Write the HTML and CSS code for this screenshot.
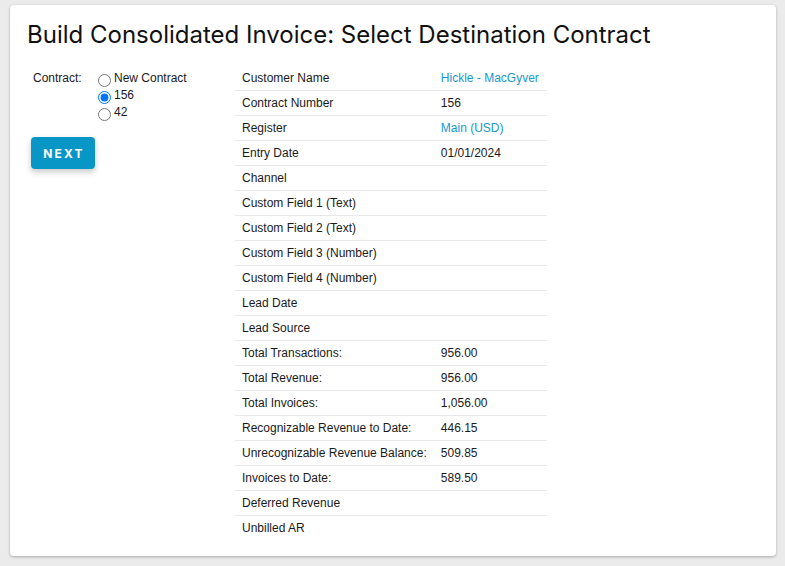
FILE: index.html
```html
<!DOCTYPE html>
<html>
<head>
<meta charset="utf-8">
<link rel="stylesheet" href="styles.css">
</head>
<body>
<div class="card">
  <h1 class="title">Build Consolidated Invoice: Select Destination Contract</h1>
  <div class="content">
    <div class="side">
      <div class="field">
        <span class="field-label">Contract:</span>
        <div class="radios">
          <label class="radio-row"><input type="radio" name="contract"> New Contract</label>
          <label class="radio-row"><input type="radio" name="contract" checked> 156</label>
          <label class="radio-row"><input type="radio" name="contract"> 42</label>
        </div>
      </div>
      <button class="btn-next">NEXT</button>
    </div>
    <table class="details">
      <tr><td class="lbl">Customer Name</td><td class="val"><a class="link">Hickle - MacGyver</a></td></tr>
      <tr><td class="lbl">Contract Number</td><td class="val">156</td></tr>
      <tr><td class="lbl">Register</td><td class="val"><a class="link">Main (USD)</a></td></tr>
      <tr><td class="lbl">Entry Date</td><td class="val">01/01/2024</td></tr>
      <tr><td class="lbl">Channel</td><td class="val"></td></tr>
      <tr><td class="lbl">Custom Field 1 (Text)</td><td class="val"></td></tr>
      <tr><td class="lbl">Custom Field 2 (Text)</td><td class="val"></td></tr>
      <tr><td class="lbl">Custom Field 3 (Number)</td><td class="val"></td></tr>
      <tr><td class="lbl">Custom Field 4 (Number)</td><td class="val"></td></tr>
      <tr><td class="lbl">Lead Date</td><td class="val"></td></tr>
      <tr><td class="lbl">Lead Source</td><td class="val"></td></tr>
      <tr><td class="lbl">Total Transactions:</td><td class="val">956.00</td></tr>
      <tr><td class="lbl">Total Revenue:</td><td class="val">956.00</td></tr>
      <tr><td class="lbl">Total Invoices:</td><td class="val">1,056.00</td></tr>
      <tr><td class="lbl">Recognizable Revenue to Date:</td><td class="val">446.15</td></tr>
      <tr><td class="lbl">Unrecognizable Revenue Balance:</td><td class="val">509.85</td></tr>
      <tr><td class="lbl">Invoices to Date:</td><td class="val">589.50</td></tr>
      <tr><td class="lbl">Deferred Revenue</td><td class="val"></td></tr>
      <tr><td class="lbl">Unbilled AR</td><td class="val"></td></tr>
    </table>
  </div>
</div>
</body>
</html>
```

FILE: styles.css
```css
html, body {
  margin: 0;
  padding: 0;
}
body {
  background: #ebebeb;
  font-family: "Liberation Sans", Arial, sans-serif;
  font-size: 12px;
  color: #1a1a1a;
  padding: 5px 9px 10px 10px;
}
.card {
  background: #fff;
  border-radius: 4px;
  box-shadow: 0 1px 3px rgba(0,0,0,0.28);
  padding: 15px 17px 15px 17px;
  box-sizing: border-box;
  height: 551px;
}
.title {
  margin: 0;
  font-family: Inter, "Liberation Sans", sans-serif;
  font-weight: 400;
  font-size: 24px;
  line-height: 30px;
  color: #111;
  letter-spacing: 0;
}
.content {
  display: flex;
  margin-top: 16px;
}
.side {
  width: 208px;
  flex: none;
}
.field {
  display: flex;
  padding-top: 4px;
  padding-left: 6px;
}
.field-label {
  width: 65px;
  line-height: 17px;
}
.radios {
  display: flex;
  flex-direction: column;
}
.radio-row {
  display: flex;
  align-items: flex-start;
  line-height: 17px;
  height: 17px;
}
.radio-row input {
  margin: 4px 3px 0 0;
  width: 13px;
  height: 13px;
}
.btn-next {
  margin-top: 16px;
  margin-left: 4px;
  width: 64px;
  height: 32px;
  border: none;
  border-radius: 4px;
  background: #0896c7;
  color: #fff;
  font-family: Inter, "Liberation Sans", sans-serif;
  font-weight: 700;
  font-size: 12px;
  letter-spacing: 2.2px;
  padding: 0 0 0 2px;
  box-shadow: 0 3px 6px rgba(0,0,0,0.22);
}
.details {
  border-collapse: collapse;
  width: 312px;
}
.details td {
  height: 24px;
  padding: 0 7px;
  border-bottom: 1px solid #e8e8e8;
  vertical-align: middle;
  white-space: nowrap;
}
.details tr:last-child td {
  border-bottom: none;
}
.lbl {
  width: 182px;
}
.link {
  color: #1897cf;
  text-decoration: none;
}
```
